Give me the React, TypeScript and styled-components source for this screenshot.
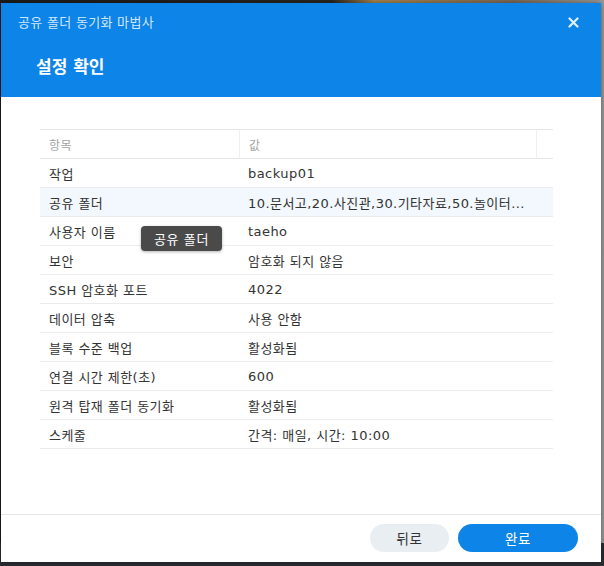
import styled, { createGlobalStyle } from "styled-components";

const GlobalStyle = createGlobalStyle`
  html, body {
    margin: 0;
    padding: 0;
  }
  body {
    background: linear-gradient(90deg, #1c1c1c 0%, #2a2622 55%, #a8854f 62%, #7d6a55 85%, #9a9a9a 100%);
    font-family: "DejaVu Sans", "Noto Sans CJK KR", sans-serif;
  }
`;

const rows = [
  { label: "작업", value: "backup01" },
  { label: "공유 폴더", value: "10.문서고,20.사진관,30.기타자료,50.놀이터...", active: true },
  { label: "사용자 이름", value: "taeho" },
  { label: "보안", value: "암호화 되지 않음" },
  { label: "SSH 암호화 포트", value: "4022" },
  { label: "데이터 압축", value: "사용 안함" },
  { label: "블록 수준 백업", value: "활성화됨" },
  { label: "연결 시간 제한(초)", value: "600" },
  { label: "원격 탑재 폴더 동기화", value: "활성화됨" },
  { label: "스케줄", value: "간격: 매일, 시간: 10:00" },
];

const App = () => {
  return (
    <>
      <GlobalStyle />
      <Page>
        <Dialog>
          <Header>
            <TitleBar>
              <Title>공유 폴더 동기화 마법사</Title>
              <Close aria-label="close">
                <svg width="11" height="11" viewBox="0 0 11 11">
                  <path d="M1.5 1.5 L9.5 9.5 M9.5 1.5 L1.5 9.5" stroke="currentColor" strokeWidth="2.2" strokeLinecap="round" />
                </svg>
              </Close>
            </TitleBar>
            <Step>설정 확인</Step>
          </Header>
          <Body>
            <Grid>
              <HeadRow>
                <HeadCell>항목</HeadCell>
                <HeadCell>값</HeadCell>
                <HeadCell />
              </HeadRow>
              {rows.map((r) => (
                <Row key={r.label} $active={r.active}>
                  <Label>{r.label}</Label>
                  <Value>{r.value}</Value>
                </Row>
              ))}
              <Tooltip>공유 폴더</Tooltip>
            </Grid>
          </Body>
          <Footer>
            <Button>뒤로</Button>
            <Button $primary>완료</Button>
          </Footer>
        </Dialog>
      </Page>
    </>
  );
};

export default App;

const Page = styled.div`
  width: 604px;
  height: 566px;
  box-sizing: border-box;
  padding: 3px 3px 4px 1px;
  background: linear-gradient(180deg, transparent 0 96%, #2a2e33 96%);
`;

const Dialog = styled.div`
  height: 100%;
  display: flex;
  flex-direction: column;
  background: #fff;
  box-shadow: 0 0 6px rgba(0, 0, 0, 0.4);
  overflow: hidden;
`;

const Header = styled.div`
  background: #0d84e8;
  height: 94px;
  color: #fff;
`;

const TitleBar = styled.div`
  height: 36px;
  display: flex;
  align-items: center;
  justify-content: space-between;
  padding: 0 22px 0 17px;
`;

const Title = styled.div`
  font-size: 13px;
  letter-spacing: 0.3px;
  color: rgba(255, 255, 255, 0.82);
`;

const Close = styled.div`
  display: flex;
  color: rgba(255, 255, 255, 0.88);
  margin-top: 2px;
`;

const Step = styled.div`
  height: 58px;
  box-sizing: border-box;
  padding: 0 0 6px 35px;
  display: flex;
  align-items: center;
  font-size: 17px;
  font-weight: 700;
`;

const Body = styled.div`
  flex: 1;
  padding: 32px 48px 0 39px;
`;

const Grid = styled.div`
  position: relative;
  border-top: 1px solid #e6e6e6;
  font-size: 13px;
  letter-spacing: 0.45px;
  color: #333;
`;

const HeadRow = styled.div`
  display: grid;
  grid-template-columns: 200px 297px 1fr;
  height: 28px;
  border-bottom: 1px solid #e6e6e6;
`;

const HeadCell = styled.div`
  display: flex;
  align-items: center;
  padding-left: 9px;
  font-size: 12px;
  color: #a3a3a3;
  border-right: 1px solid #f0f0f0;

  &:last-child {
    border-right: none;
  }
`;

const Row = styled.div<{ $active?: boolean }>`
  display: grid;
  grid-template-columns: 200px 1fr;
  height: 28px;
  border-bottom: 1px solid #ececec;
  background: ${(p) => (p.$active ? "#f2f8fd" : "#fff")};
`;

const Label = styled.div`
  display: flex;
  align-items: center;
  padding-left: 9px;
`;

const Value = styled.div`
  display: flex;
  align-items: center;
  padding-left: 8px;
  white-space: nowrap;
  overflow: hidden;
`;

const Tooltip = styled.div`
  position: absolute;
  left: 101px;
  top: 96px;
  width: 81px;
  height: 25px;
  display: flex;
  align-items: center;
  justify-content: center;
  background: #4a4a4a;
  color: #fff;
  border-radius: 4px;
  font-size: 13px;
  letter-spacing: 0.6px;
  box-shadow: 0 1px 3px rgba(0, 0, 0, 0.3);
`;

const Footer = styled.div`
  height: 48px;
  box-sizing: border-box;
  border-top: 1px solid #e6e6e6;
  display: flex;
  justify-content: flex-end;
  align-items: flex-start;
  gap: 9px;
  padding: 9px 23px 0 0;
`;

const Button = styled.button<{ $primary?: boolean }>`
  height: 28px;
  width: ${(p) => (p.$primary ? "120px" : "79px")};
  border: none;
  border-radius: 14px;
  font-family: "DejaVu Sans", "Noto Sans CJK KR", sans-serif;
  font-size: 13.5px;
  letter-spacing: 0.5px;
  background: ${(p) => (p.$primary ? "#0d84e8" : "#e9eef3")};
  color: ${(p) => (p.$primary ? "#fff" : "#333")};
`;
